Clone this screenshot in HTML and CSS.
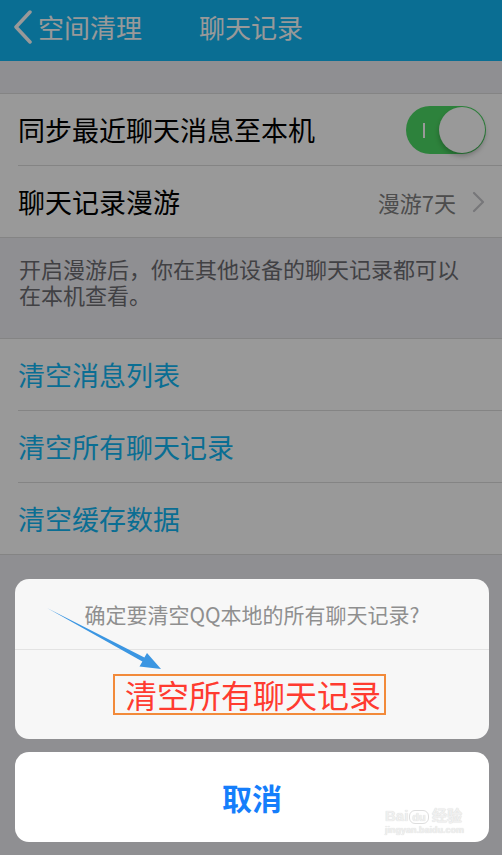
FILE: index.html
```html
<!DOCTYPE html>
<html lang="zh-CN">
<head>
  <meta charset="UTF-8" />
  <title>聊天记录</title>
  <link rel="stylesheet" href="styles.css">
</head>
<body>
  <div class="screen">
    <header class="navbar">
      <div class="back">
        <svg class="back-icon" width="20" height="34" viewBox="0 0 20 34">
          <polyline points="17,2 3,17 17,32" fill="none" stroke="#fff" stroke-width="3.5" stroke-linecap="round" stroke-linejoin="round"/>
        </svg>
        <span>空间清理</span>
      </div>
      <h1 class="title">聊天记录</h1>
    </header>

    <section class="group first">
      <div class="row">
        <span class="label">同步最近聊天消息至本机</span>
        <div class="switch on">
          <span class="switch-mark"></span>
          <span class="knob"></span>
        </div>
      </div>
      <div class="row">
        <span class="label">聊天记录漫游</span>
        <span class="detail">漫游7天</span>
        <svg class="chevron" width="13" height="22" viewBox="0 0 13 22">
          <polyline points="2,2 11,11 2,20" fill="none" stroke="#c7c7cc" stroke-width="2.2" stroke-linecap="round" stroke-linejoin="round"/>
        </svg>
      </div>
    </section>

    <p class="note">开启漫游后，你在其他设备的聊天记录都可以在本机查看。</p>

    <section class="group">
      <div class="row link">清空消息列表</div>
      <div class="row link">清空所有聊天记录</div>
      <div class="row link">清空缓存数据</div>
    </section>

    <div class="mask"></div>

    <div class="sheet">
      <div class="sheet-card">
        <div class="sheet-msg">确定要清空QQ本地的所有聊天记录?</div>
        <div class="sheet-action"><span class="mark">清空所有聊天记录</span></div>
      </div>
      <div class="sheet-card cancel">
        <span>取消</span>
        <div class="watermark">
          <div class="wm-logo">Bai<span class="wm-du">du</span>经验</div>
          <div class="wm-url">jingyan.baidu.com</div>
        </div>
      </div>
    </div>

    <svg class="arrow" width="502" height="855" viewBox="0 0 502 855">
      <polygon points="47,608 142.4,661.6 139.5,666.5 161,669 147,653 144.4,657.6" fill="#3b96e2"/>
    </svg>
  </div>
</body>
</html>
```

FILE: styles.css
```css
:root {
  --qq-blue: #12b7f5;
  --page-bg: #efeff4;
  --line: #dcdcdc;
  --switch-green: #4cd964;
}

body {
  margin: 0;
  font-family: "Noto Sans CJK SC", "Noto Sans", sans-serif;
}

.screen {
  position: relative;
  width: 502px;
  height: 855px;
  overflow: hidden;
  background: var(--page-bg);
}

/* Navigation bar */
.navbar {
  position: relative;
  height: 53px;
  padding-bottom: 8px;
  background: var(--qq-blue);
  color: #fff;
  display: flex;
  align-items: center;
}
.back {
  display: flex;
  align-items: center;
  gap: 5px;
  padding-left: 13px;
  font-size: 26px;
}
.title {
  position: absolute;
  left: 0;
  right: 0;
  top: 0;
  height: 53px;
  margin: 0;
  display: flex;
  align-items: center;
  justify-content: center;
  font-size: 26px;
  font-weight: normal;
  pointer-events: none;
}

/* Table groups */
.group {
  background: #fff;
  border-top: 1px solid var(--line);
  border-bottom: 1px solid var(--line);
}
.group.first {
  margin-top: 32px;
}
.row {
  height: 71px;
  margin-left: 18px;
  padding-right: 16px;
  display: flex;
  align-items: center;
  font-size: 27px;
  color: #000;
  border-bottom: 1px solid var(--line);
}
.row:last-child {
  border-bottom: none;
}
.label {
  flex: 1;
}
.detail {
  font-size: 22px;
  color: #808080;
  margin-right: 16px;
}
.chevron {
  margin-right: 1px;
}
.row.link {
  color: var(--qq-blue);
}

.switch {
  position: relative;
  width: 80px;
  height: 48px;
  border-radius: 24px;
  background: var(--switch-green);
}
.switch-mark {
  position: absolute;
  left: 17px;
  top: 17px;
  width: 2px;
  height: 15px;
  background: #fff;
}
.knob {
  position: absolute;
  right: 1px;
  top: 1px;
  width: 46px;
  height: 46px;
  border-radius: 50%;
  background: #fff;
  box-shadow: 0 3px 5px rgba(0, 0, 0, 0.25);
}

.note {
  margin: 0;
  padding: 17px 30px 31px 19px;
  font-size: 22px;
  line-height: 26px;
  color: #6d6d72;
}

/* Dim layer + action sheet */
.mask {
  position: absolute;
  inset: 0;
  background: rgba(0, 0, 0, 0.4);
}

.sheet {
  position: absolute;
  left: 15px;
  right: 13px;
  bottom: 13px;
  display: flex;
  flex-direction: column;
  gap: 13px;
}
.sheet-card {
  background: #f7f7f7;
  border-radius: 14px;
  overflow: hidden;
}
.sheet-msg {
  height: 70px;
  display: flex;
  align-items: center;
  justify-content: center;
  font-size: 21px;
  color: #8f8f8f;
  border-bottom: 1px solid #e3e3e3;
}
.sheet-action {
  height: 89px;
  display: flex;
  align-items: center;
  justify-content: center;
  padding-right: 5px;
}
.mark {
  padding: 0 3px 0 10px;
  height: 37px;
  line-height: 37px;
  border: 2px solid #f28a3a;
  font-size: 32px;
  color: #ff3b30;
}

.cancel {
  position: relative;
  height: 90px;
  background: #fff;
  display: flex;
  align-items: center;
  justify-content: center;
  font-size: 30px;
  font-weight: bold;
  color: #157efb;
}

.watermark {
  position: absolute;
  left: 370px;
  top: 56px;
  color: #f0f0f0;
  font-weight: bold;
  text-shadow: 0 0 1px #cfcfcf;
}
.wm-logo {
  font-family: "Liberation Sans", sans-serif;
  font-size: 15px;
  line-height: 16px;
}
.wm-du {
  display: inline-block;
  margin: 0 3px 0 1px;
  padding: 0 2px;
  border-radius: 6px;
  border: 1px solid #dedede;
  font-size: 11px;
  line-height: 12px;
}
.wm-url {
  font-family: "Liberation Sans", sans-serif;
  font-size: 9px;
  line-height: 12px;
}

.arrow {
  position: absolute;
  left: 0;
  top: 0;
  pointer-events: none;
}
```
